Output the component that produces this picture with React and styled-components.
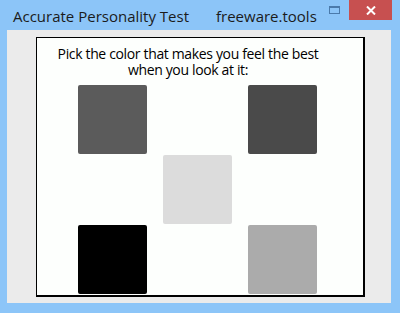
import React from "react";
import styled, { createGlobalStyle } from "styled-components";

const Global = createGlobalStyle`
  html, body { margin: 0; padding: 0; }
  body { width: 400px; height: 313px; overflow: hidden; background: #8cc5f8; }
`;

const swatches = [
  { color: "#5b5b5b", col: 1, row: 1 },
  { color: "#4a4a4a", col: 3, row: 1 },
  { color: "#dcdcdc", col: 2, row: 2 },
  { color: "#000000", col: 1, row: 3 },
  { color: "#ababab", col: 3, row: 3 },
];

function App() {
  return (
    <>
      <Global />
      <Window>
        <TitleBar>
          <Title>Accurate Personality Test</Title>
          <Brand>freeware.tools</Brand>
          <Controls>
            <MaxButton>
              <svg width="11" height="8" viewBox="0 0 11 8">
                <rect x="0.5" y="0.5" width="10" height="7" fill="none" stroke="#4a7aab" />
                <rect x="0" y="0" width="11" height="2" fill="#4a7aab" />
              </svg>
            </MaxButton>
            <CloseButton>
              <svg width="10" height="9" viewBox="0 0 10 9">
                <path d="M1 0.5 L9 8.5 M9 0.5 L1 8.5" stroke="#fff" strokeWidth="2" />
              </svg>
            </CloseButton>
          </Controls>
        </TitleBar>
        <Client>
          <Board>
            <Prompt>
              <Line>Pick the color that makes you feel the best</Line>
              <Line>when you look at it:</Line>
            </Prompt>
            <Swatches>
              {swatches.map((s, i) => (
                <Swatch key={i} $color={s.color} $col={s.col} $row={s.row} />
              ))}
            </Swatches>
          </Board>
        </Client>
      </Window>
    </>
  );
}

const Window = styled.div`
  display: flex;
  flex-direction: column;
  width: 400px;
  height: 313px;
  background: #8cc5f8;
  font-family: "Open Sans", "Noto Sans", sans-serif;
`;

const TitleBar = styled.div`
  display: flex;
  align-items: flex-start;
  height: 30px;
  flex-shrink: 0;
`;

const Title = styled.div`
  margin: 7px 0 0 13px;
  font-size: 15px;
  line-height: 18px;
  color: #1b1b1b;
  width: 203px;
`;

const Brand = styled.div`
  margin-top: 7px;
  font-size: 15px;
  line-height: 18px;
  color: #1b1b1b;
`;

const Controls = styled.div`
  display: flex;
  margin-left: auto;
  margin-right: 8px;
`;

const MaxButton = styled.div`
  width: 26px;
  height: 20px;
  display: flex;
  align-items: center;
  justify-content: center;
  padding-right: 2px;
`;

const CloseButton = styled.div`
  width: 43px;
  height: 20px;
  background: #c75050;
  display: flex;
  align-items: center;
  justify-content: center;
`;

const Client = styled.div`
  flex: 1;
  display: flex;
  margin: 0 9px 10px 7px;
  padding: 7px 26px 6px 29px;
  background: #ebebeb;
`;

const Board = styled.div`
  flex: 1;
  display: flex;
  flex-direction: column;
  background: #fdfffd;
  border: 1px solid #000;
  border-right-width: 2px;
  border-bottom-width: 2px;
  overflow: hidden;
`;

const Prompt = styled.div`
  display: flex;
  flex-direction: column;
  align-items: center;
  padding: 8px 24px 0 0;
  font-size: 14px;
  letter-spacing: -0.35px;
  color: #000;
`;

const Line = styled.div`
  height: 16px;
  line-height: 16px;
  white-space: nowrap;
`;

const Swatches = styled.div`
  display: grid;
  grid-template-columns: repeat(3, 69px);
  grid-template-rows: repeat(3, 69px);
  column-gap: 16px;
  row-gap: 1px;
  margin: 7px 0 0 41px;
`;

const Swatch = styled.div`
  grid-column: ${(p) => p.$col};
  grid-row: ${(p) => p.$row};
  background: ${(p) => p.$color};
  border-radius: 2px;
`;

export default App;
